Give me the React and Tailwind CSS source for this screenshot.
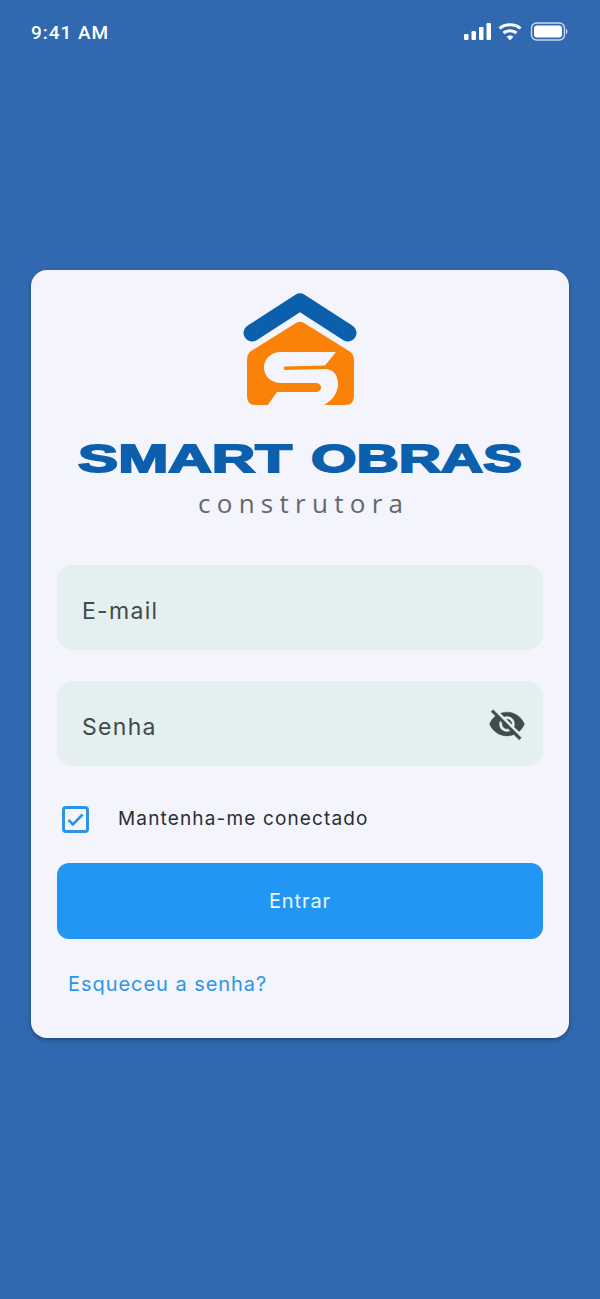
import React from "react";

function StatusIcons() {
  return (
    <svg width="106" height="20" viewBox="0 0 106 20" className="block">
      <g fill="#fff">
        <rect x="0" y="12" width="4.5" height="6" rx="1.2" />
        <rect x="7.5" y="9" width="4.5" height="9" rx="1.2" />
        <rect x="15" y="5" width="4.5" height="13" rx="1.2" />
        <rect x="22.5" y="1" width="4.5" height="17" rx="1.2" />
      </g>
      <g fill="none" stroke="#fff" strokeWidth="3" strokeLinecap="butt">
        <path d="M35.5 6.5 C41 1.5 51 1.5 56.5 6.5" />
        <path d="M39.5 11 C43 8 49 8 52.5 11" />
      </g>
      <path d="M42.6 14.6 C44.6 13 47.4 13 49.4 14.6 L46 18.5 Z" fill="#fff" />
      <rect x="67.5" y="1" width="33" height="17" rx="5" fill="none" stroke="#fff" strokeOpacity="0.75" strokeWidth="1.4" />
      <rect x="70" y="3.5" width="28" height="12" rx="3" fill="#fff" />
      <path d="M102 7 C104 7.5 104 11.5 102 12 Z" fill="#fff" fillOpacity="0.7" />
    </svg>
  );
}

function Logo() {
  return (
    <svg width="538" height="250" viewBox="31 270 538 250" className="block">
      <path d="M252 333 L300 302 L348 333" fill="none" stroke="#0b5fad" strokeWidth="17" strokeLinecap="round" strokeLinejoin="round" />
      <path d="M296 323 Q300 320.5 304 323 L349 351 Q354 354 354 360 L354 396 Q354 405 345 405 L255 405 Q247 405 247 396 L247 360 Q247 354 251 351 Z" fill="#fb8208" />
      <path d="M336 352 L281 352 C270 352 264 360 264 367.5 C264 376 271 383 281 383 L315 383 C319 383 321 385 321 387.5 C321 390 319 392 315 392 L277 392 L267 406 L322 406 C333 401 338 392 338 384 C338 374 332 369 325 369 L285 370 C283 369.3 283 367.2 285 366.5 L325 365.5 Z" fill="#f4f4fc" />
      <g fill="#0b5fad" stroke="#0b5fad" strokeWidth="1.8" fontFamily="'Liberation Sans', sans-serif" fontWeight="700" fontSize="39">
        <text x="78" y="471.5" textLength="214" lengthAdjust="spacingAndGlyphs">SMART</text>
        <text x="311" y="471.5" textLength="211" lengthAdjust="spacingAndGlyphs">OBRAS</text>
      </g>
      <text x="198" y="513" textLength="205" fill="#66676b" fontFamily="'Open Sans', sans-serif" fontSize="26">construtora</text>
    </svg>
  );
}

function EyeOff() {
  return (
    <svg width="38" height="38" viewBox="0 0 24 24" fill="#3f4a4c" stroke="#3f4a4c" strokeWidth="0.3">
      <path d="M12 7c2.76 0 5 2.24 5 5 0 .65-.13 1.26-.36 1.83l2.92 2.92c1.51-1.26 2.7-2.89 3.43-4.75-1.73-4.39-6-7.5-11-7.5-1.4 0-2.74.25-3.98.7l2.16 2.16C10.74 7.13 11.35 7 12 7zM2 4.27l2.28 2.28.46.46C3.08 8.3 1.78 10.02 1 12c1.73 4.39 6 7.5 11 7.5 1.55 0 3.03-.3 4.38-.84l.42.42L19.73 22 21 20.73 3.27 3 2 4.27zM7.53 9.8l1.55 1.55c-.05.21-.08.43-.08.65 0 1.66 1.34 3 3 3 .22 0 .44-.03.65-.08l1.55 1.55c-.67.33-1.41.53-2.2.53-2.76 0-5-2.24-5-5 0-.79.2-1.53.53-2.2zm4.31-.78l3.15 3.15.02-.16c0-1.66-1.34-3-3-3l-.17.01z" />
    </svg>
  );
}

export default function App() {
  return (
    <div className="w-[600px] h-[1299px] bg-[#3069b0] flex flex-col font-['Inter',sans-serif] overflow-hidden">
      <div className="h-[270px] shrink-0 flex items-start justify-between pl-[31px] pr-[30px] pt-[22px]">
        <span className="text-white text-[19px] leading-[22px] font-medium tracking-[0.95px] font-['Roboto',sans-serif]">9:41 AM</span>
        <StatusIcons />
      </div>
      <div className="mx-[31px] h-[768px] bg-[#f4f4fc] rounded-[16px] shadow-[0_2px_4px_rgba(0,0,0,0.3)] flex flex-col">
        <Logo />
        <div className="px-[26px] pt-[45px] flex flex-col">
          <div className="h-[85px] bg-[#e3f0ef] rounded-[16px] flex items-center pl-[25px] pt-[7px] text-[23px] tracking-[1.3px] text-[#40494b]">E-mail</div>
          <div className="h-[85px] mt-[31px] bg-[#e3f0ef] rounded-[16px] flex items-center justify-between pl-[25px] pr-[17px] text-[23px] tracking-[1.3px] text-[#40494b]">
            <span className="pt-[7px]">Senha</span>
            <EyeOff />
          </div>
          <div className="h-[97px] flex items-center pl-[5px] pt-[9px]">
            <span className="w-[27px] h-[27px] border-[3px] border-[#2b96e8] rounded-[4px] flex items-center justify-center">
              <svg width="19" height="19" viewBox="0 0 19 19" fill="none" stroke="#2b96e8" strokeWidth="2.6">
                <path d="M2.5 10 L7 14.5 L16.5 4.5" />
              </svg>
            </span>
            <span className="ml-[29px] text-[19px] tracking-[1.15px] text-[#2a2e33]">Mantenha-me conectado</span>
          </div>
          <div className="h-[76px] bg-[#2196f3] rounded-[12px] flex items-center justify-center text-white/90 text-[20px] tracking-[0.9px]">Entrar</div>
          <div className="pl-[11px] pt-[31px] text-[20px] leading-[28px] tracking-[0.95px] text-[#2b96e8]">Esqueceu a senha?</div>
        </div>
      </div>
    </div>
  );
}
